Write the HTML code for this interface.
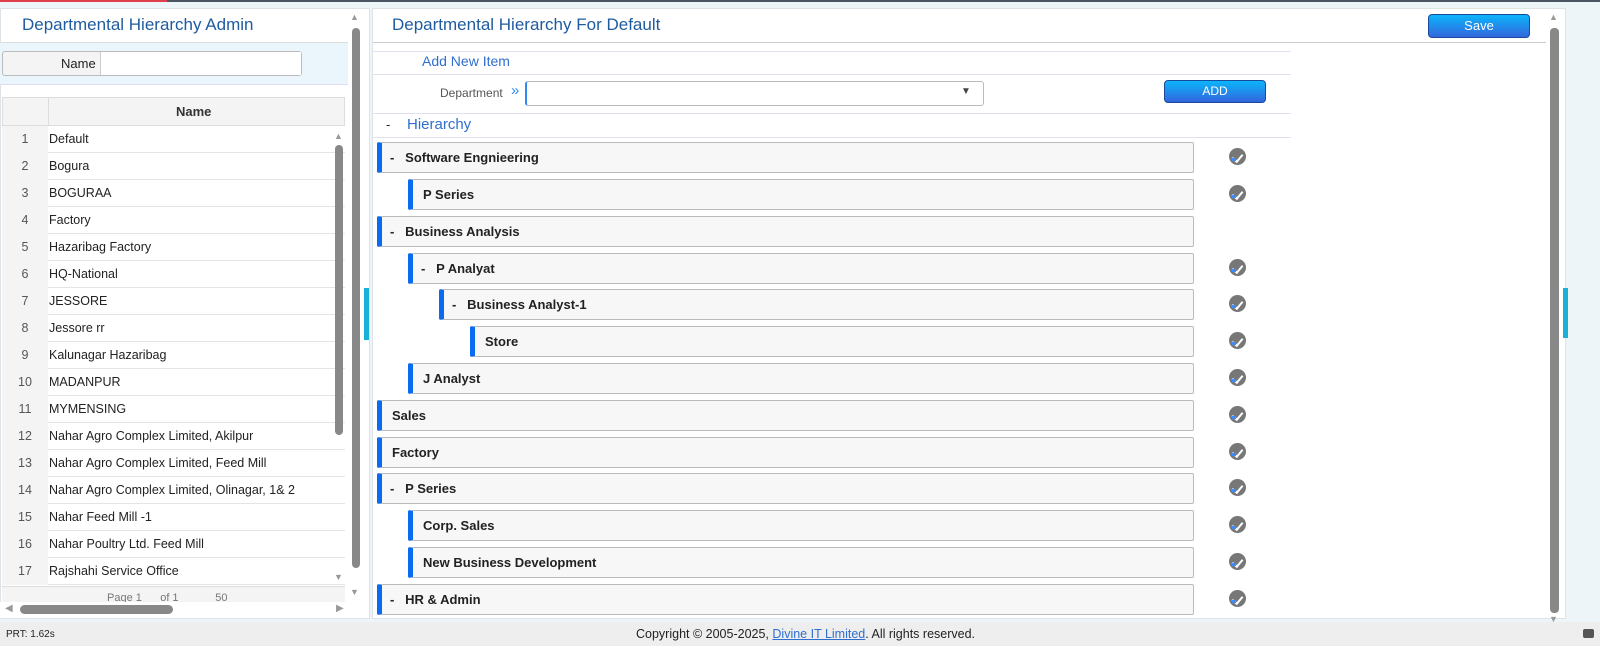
<!DOCTYPE html>
<html><head><meta charset="utf-8"><style>
*{box-sizing:border-box;margin:0;padding:0}
body{width:1600px;height:659px;overflow:hidden;background:#eef5f8;font-family:"Liberation Sans",sans-serif;position:relative;font-size:13px;color:#222}
.a{position:absolute}
.topbar{left:0;top:0;width:1600px;height:7px;background:#eef5f8;border-top:2px solid #4a5561}
.red{left:0;top:0;width:167px;height:2px;background:#e0404a}
.panel{background:#fff;border:1px solid #dde3e6}
.title{font-size:17px;color:#1f5b9e}
.row{left:2px;width:343px;height:27px;border-bottom:1px solid #e4e4e4;font-size:12.5px}
.row .n{position:absolute;left:0;width:46px;height:27px;background:#f4f4f4;text-align:center;line-height:27px;color:#555}
.row .t{position:absolute;left:47px;line-height:27px;color:#222}
.node{height:31px;border:1px solid #bbb;border-left:5px solid #0a6af0;border-radius:2px;background:#f7f7f7;font-weight:bold;font-size:13px;line-height:30px;right:406px}
.ic{width:17px;height:17px;border-radius:50%;background:#777;left:1229px}
.ic:after{content:"";position:absolute;left:5px;top:4px;width:5px;height:8px;border-right:2px solid #fff;border-bottom:2px solid #fff;transform:rotate(40deg)}
.ic:before{content:"";position:absolute;left:3px;top:10px;width:4px;height:3px;background:#3a8cff;z-index:1}
.btn{background:linear-gradient(#0bb5fb,#3366dd);border:1px solid #1a4a99;border-radius:4px;color:#fff;text-align:center;font-size:13px}
.hl{height:1px;background:#e0e0ee}
</style></head><body>
<div class="a topbar"></div><div class="a red"></div>

<!-- left panel -->
<div class="a panel" style="left:0;top:8px;width:370px;height:611px"></div>
<div class="a title" style="left:22px;top:15px">Departmental Hierarchy Admin</div>
<div class="a" style="left:0;top:42px;width:348px;height:1px;background:#ddd"></div>
<div class="a" style="left:0;top:43px;width:348px;height:42px;background:#eaf5fc;border-bottom:1px solid #dde"></div>
<div class="a" style="left:2px;top:51px;width:300px;height:25px;border:1px solid #bbb;border-radius:3px;background:#f4f4f4"></div>
<div class="a" style="left:100px;top:52px;width:201px;height:23px;background:#fff;border-left:1px solid #ccc"></div>
<div class="a" style="left:61px;top:56px;font-size:13px">Name</div>
<div class="a" style="left:2px;top:97px;width:343px;height:29px;background:#f4f4f4;border:1px solid #ddd"></div>
<div class="a" style="left:48px;top:97px;width:1px;height:29px;background:#ddd"></div>
<div class="a" style="left:176px;top:104px;font-weight:bold;font-size:13px;color:#333">Name</div>
<div class="a" style="left:0;top:126px">
<div class="a row" style="top:0"><span class="n">1</span><span class="t">Default</span></div>
<div class="a row" style="top:27px"><span class="n">2</span><span class="t">Bogura</span></div>
<div class="a row" style="top:54px"><span class="n">3</span><span class="t">BOGURAA</span></div>
<div class="a row" style="top:81px"><span class="n">4</span><span class="t">Factory</span></div>
<div class="a row" style="top:108px"><span class="n">5</span><span class="t">Hazaribag Factory</span></div>
<div class="a row" style="top:135px"><span class="n">6</span><span class="t">HQ-National</span></div>
<div class="a row" style="top:162px"><span class="n">7</span><span class="t">JESSORE</span></div>
<div class="a row" style="top:189px"><span class="n">8</span><span class="t">Jessore rr</span></div>
<div class="a row" style="top:216px"><span class="n">9</span><span class="t">Kalunagar Hazaribag</span></div>
<div class="a row" style="top:243px"><span class="n">10</span><span class="t">MADANPUR</span></div>
<div class="a row" style="top:270px"><span class="n">11</span><span class="t">MYMENSING</span></div>
<div class="a row" style="top:297px"><span class="n">12</span><span class="t">Nahar Agro Complex Limited, Akilpur</span></div>
<div class="a row" style="top:324px"><span class="n">13</span><span class="t">Nahar Agro Complex Limited, Feed Mill</span></div>
<div class="a row" style="top:351px"><span class="n">14</span><span class="t">Nahar Agro Complex Limited, Olinagar, 1&amp; 2</span></div>
<div class="a row" style="top:378px"><span class="n">15</span><span class="t">Nahar Feed Mill -1</span></div>
<div class="a row" style="top:405px"><span class="n">16</span><span class="t">Nahar Poultry Ltd. Feed Mill</span></div>
<div class="a row" style="top:432px"><span class="n">17</span><span class="t">Rajshahi Service Office</span></div>
</div>
<div class="a" style="left:2px;top:586px;width:343px;height:16px;background:#f4f4f4;border-top:1px solid #ddd;font-size:11px;color:#777;overflow:hidden;padding-left:105px;line-height:22px">Page 1 &nbsp;&nbsp;&nbsp;&nbsp; of 1 &nbsp;&nbsp;&nbsp;&nbsp;&nbsp;&nbsp;&nbsp;&nbsp;&nbsp;&nbsp; 50</div>
<div class="a" style="left:335px;top:145px;width:8px;height:290px;background:#888;border-radius:4px"></div>
<div class="a" style="left:334px;top:131px;font-size:9px;color:#999">▲</div>
<div class="a" style="left:334px;top:572px;font-size:9px;color:#999">▼</div>
<div class="a" style="left:0;top:602px;width:348px;height:16px;background:#fff"></div>
<div class="a" style="left:20px;top:605px;width:153px;height:9px;background:#888;border-radius:5px"></div>
<div class="a" style="left:5px;top:603px;font-size:10px;color:#999">◀</div>
<div class="a" style="left:336px;top:603px;font-size:10px;color:#999">▶</div>
<div class="a" style="left:352px;top:28px;width:8px;height:540px;background:#888;border-radius:4px"></div>
<div class="a" style="left:350px;top:12px;font-size:9px;color:#999">▲</div>
<div class="a" style="left:350px;top:587px;font-size:9px;color:#999">▼</div>
<div class="a" style="left:364px;top:288px;width:5px;height:52px;background:#1ab0d8"></div>

<!-- right panel -->
<div class="a panel" style="left:372px;top:8px;width:1194px;height:611px"></div>
<div class="a title" style="left:392px;top:15px">Departmental Hierarchy For Default</div>
<div class="a btn" style="left:1428px;top:14px;width:102px;height:24px;line-height:22px">Save</div>
<div class="a" style="left:373px;top:42px;width:1173px;height:1px;background:#ccc"></div>
<div class="a hl" style="left:373px;top:51px;width:918px"></div>
<div class="a hl" style="left:373px;top:74px;width:918px"></div>
<div class="a hl" style="left:373px;top:113px;width:918px"></div>
<div class="a hl" style="left:373px;top:137px;width:918px"></div>
<div class="a" style="left:422px;top:53px;font-size:14px;color:#2f6fd0">Add New Item</div>
<div class="a" style="left:440px;top:86px;font-size:12px;color:#555">Department</div>
<div class="a" style="left:511px;top:82px;font-size:15px;color:#2f8bf0">»</div>
<div class="a" style="left:525px;top:81px;width:459px;height:25px;border:1px solid #bbb;border-left:2px solid #2f8bf0;border-radius:3px;background:#fff"></div>
<div class="a" style="left:961px;top:86px;font-size:10px;color:#444">▼</div>
<div class="a btn" style="left:1164px;top:80px;width:102px;height:23px;line-height:21px;font-size:12px">ADD</div>
<div class="a" style="left:386px;top:117px;font-size:13px">-</div>
<div class="a" style="left:407px;top:116px;font-size:15px;color:#2f6fd0">Hierarchy</div>

<div class="a node" style="left:377px;top:142px;width:817px;padding-left:8px">-&nbsp;&nbsp; Software Engnieering</div>
<div class="a node" style="left:408px;top:179px;width:786px;padding-left:10px">P Series</div>
<div class="a node" style="left:377px;top:216px;width:817px;padding-left:8px">-&nbsp;&nbsp; Business Analysis</div>
<div class="a node" style="left:408px;top:253px;width:786px;padding-left:8px">-&nbsp;&nbsp; P Analyat</div>
<div class="a node" style="left:439px;top:289px;width:755px;padding-left:8px">-&nbsp;&nbsp; Business Analyst-1</div>
<div class="a node" style="left:470px;top:326px;width:724px;padding-left:10px">Store</div>
<div class="a node" style="left:408px;top:363px;width:786px;padding-left:10px">J Analyst</div>
<div class="a node" style="left:377px;top:400px;width:817px;padding-left:10px">Sales</div>
<div class="a node" style="left:377px;top:437px;width:817px;padding-left:10px">Factory</div>
<div class="a node" style="left:377px;top:473px;width:817px;padding-left:8px">-&nbsp;&nbsp; P Series</div>
<div class="a node" style="left:408px;top:510px;width:786px;padding-left:10px">Corp. Sales</div>
<div class="a node" style="left:408px;top:547px;width:786px;padding-left:10px">New Business Development</div>
<div class="a node" style="left:377px;top:584px;width:817px;padding-left:8px">-&nbsp;&nbsp; HR &amp; Admin</div>

<div class="a ic" style="top:148px"></div>
<div class="a ic" style="top:185px"></div>
<div class="a ic" style="top:259px"></div>
<div class="a ic" style="top:295px"></div>
<div class="a ic" style="top:332px"></div>
<div class="a ic" style="top:369px"></div>
<div class="a ic" style="top:406px"></div>
<div class="a ic" style="top:443px"></div>
<div class="a ic" style="top:479px"></div>
<div class="a ic" style="top:516px"></div>
<div class="a ic" style="top:553px"></div>
<div class="a ic" style="top:590px"></div>

<div class="a" style="left:1550px;top:28px;width:9px;height:585px;background:#888;border-radius:4px"></div>
<div class="a" style="left:1549px;top:12px;font-size:9px;color:#999">▲</div>
<div class="a" style="left:1549px;top:614px;font-size:9px;color:#999">▼</div>
<div class="a" style="left:1563px;top:288px;width:5px;height:50px;background:#1ab0d8"></div>

<!-- footer -->
<div class="a" style="left:0;top:622px;width:1600px;height:24px;background:#eeeeee"></div>
<div class="a" style="left:6px;top:629px;font-size:10px">PRT: 1.62s</div>
<div class="a" style="left:636px;top:627px;font-size:12.5px">Copyright © 2005-2025, <span style="color:#2f6fd0;text-decoration:underline">Divine IT Limited</span>. All rights reserved.</div>
<div class="a" style="left:1583px;top:629px;width:11px;height:9px;background:#555;border-radius:2px"></div>
<div class="a" style="left:0;top:646px;width:1600px;height:13px;background:#fff"></div>
</body></html>
